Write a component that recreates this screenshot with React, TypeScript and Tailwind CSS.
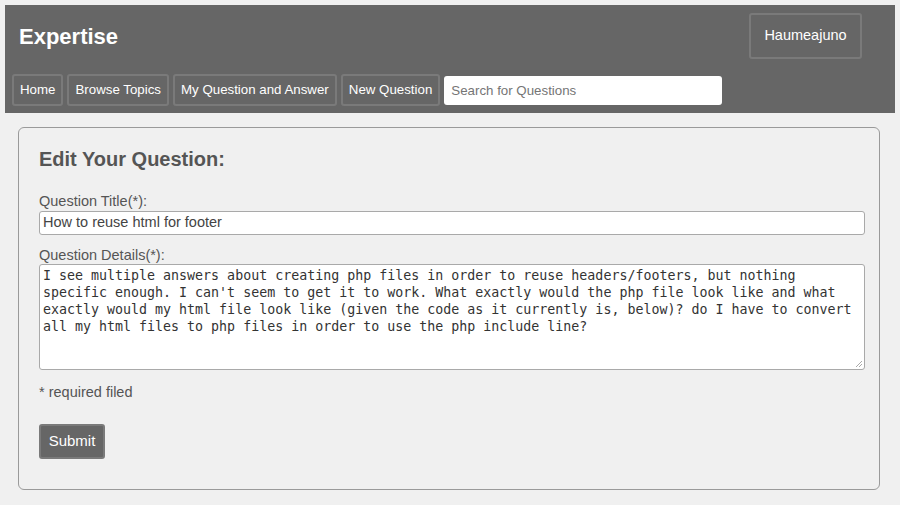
import React from "react";

const navItems = ["Home", "Browse Topics", "My Question and Answer", "New Question"];

const details =
  "I see multiple answers about creating php files in order to reuse headers/footers, but nothing specific enough. I can't seem to get it to work. What exactly would the php file look like and what exactly would my html file look like (given the code as it currently is, below)? do I have to convert all my html files to php files in order to use the php include line?";

export default function App() {
  return (
    <div className="min-h-[505px] w-[900px] bg-[#f0f0f0] pt-[5px] font-['Liberation_Sans',Arial,sans-serif]">
      <header className="mx-[5px] h-[108px] bg-[#666666] pt-[8px]">
        <div className="flex h-[46px] items-center justify-between">
          <h1 className="pl-[14px] text-[22px] font-bold text-white">Expertise</h1>
          <div className="mr-[33px] flex h-[46px] w-[113px] items-center justify-center rounded-[3px] border-2 border-[#7a7a7a] text-[14.5px] text-white">
            Haumeajuno
          </div>
        </div>
        <nav className="mt-[15px] flex items-center gap-[4px] pl-[7px]">
          {navItems.map((n) => (
            <button
              key={n}
              className="flex h-[32px] items-center rounded-[3px] border-2 border-[#7a7a7a] bg-[#666666] px-[6px] text-[13.3px] text-white"
            >
              {n}
            </button>
          ))}
          <input
            readOnly
            placeholder="Search for Questions"
            className="h-[29px] w-[278px] rounded-[3px] bg-white px-[7px] text-[13.3px] text-[#333] outline-none placeholder:text-[#757575]"
          />
        </nav>
      </header>
      <main className="ml-[18px] mt-[14px] h-[363px] w-[862px] rounded-[6px] border border-[#9a9a9a] pl-[20px] pr-[14px] pt-[19px]">
        <h2 className="text-[20px] font-bold leading-[24px] text-[#555555]">Edit Your Question:</h2>
        <label className="mt-[22px] block text-[14.5px] leading-[17px] text-[#555555]">Question Title(*):</label>
        <div className="mt-[1px] flex h-[24px] w-[826px] items-center rounded-[3px] border border-[#a9a9a9] bg-white px-[3px] text-[14.5px] text-[#444444]">
          How to reuse html for footer
        </div>
        <label className="mt-[12px] block text-[14.5px] leading-[17px] text-[#555555]">Question Details(*):</label>
        <div className="relative mt-[0px] h-[106px] w-[826px] rounded-[3px] border border-[#a9a9a9] bg-white px-[3px] pt-[2px] font-['DejaVu_Sans_Mono','Liberation_Mono',monospace] text-[13.3px] leading-[17px] text-[#333333]">
          {details}
          <svg className="absolute bottom-[1px] right-[1px]" width="8" height="8" viewBox="0 0 8 8">
            <line x1="7" y1="1" x2="1" y2="7" stroke="#aaa" strokeWidth="1" />
            <line x1="7" y1="4" x2="4" y2="7" stroke="#aaa" strokeWidth="1" />
          </svg>
        </div>
        <p className="mt-[14px] text-[14.5px] leading-[17px] text-[#555555]">* required filed</p>
        <button className="mt-[23px] flex h-[35px] w-[66px] items-center justify-center rounded-[3px] border-2 border-[#7a7a7a] bg-[#666666] text-[15px] text-white">
          Submit
        </button>
      </main>
    </div>
  );
}
